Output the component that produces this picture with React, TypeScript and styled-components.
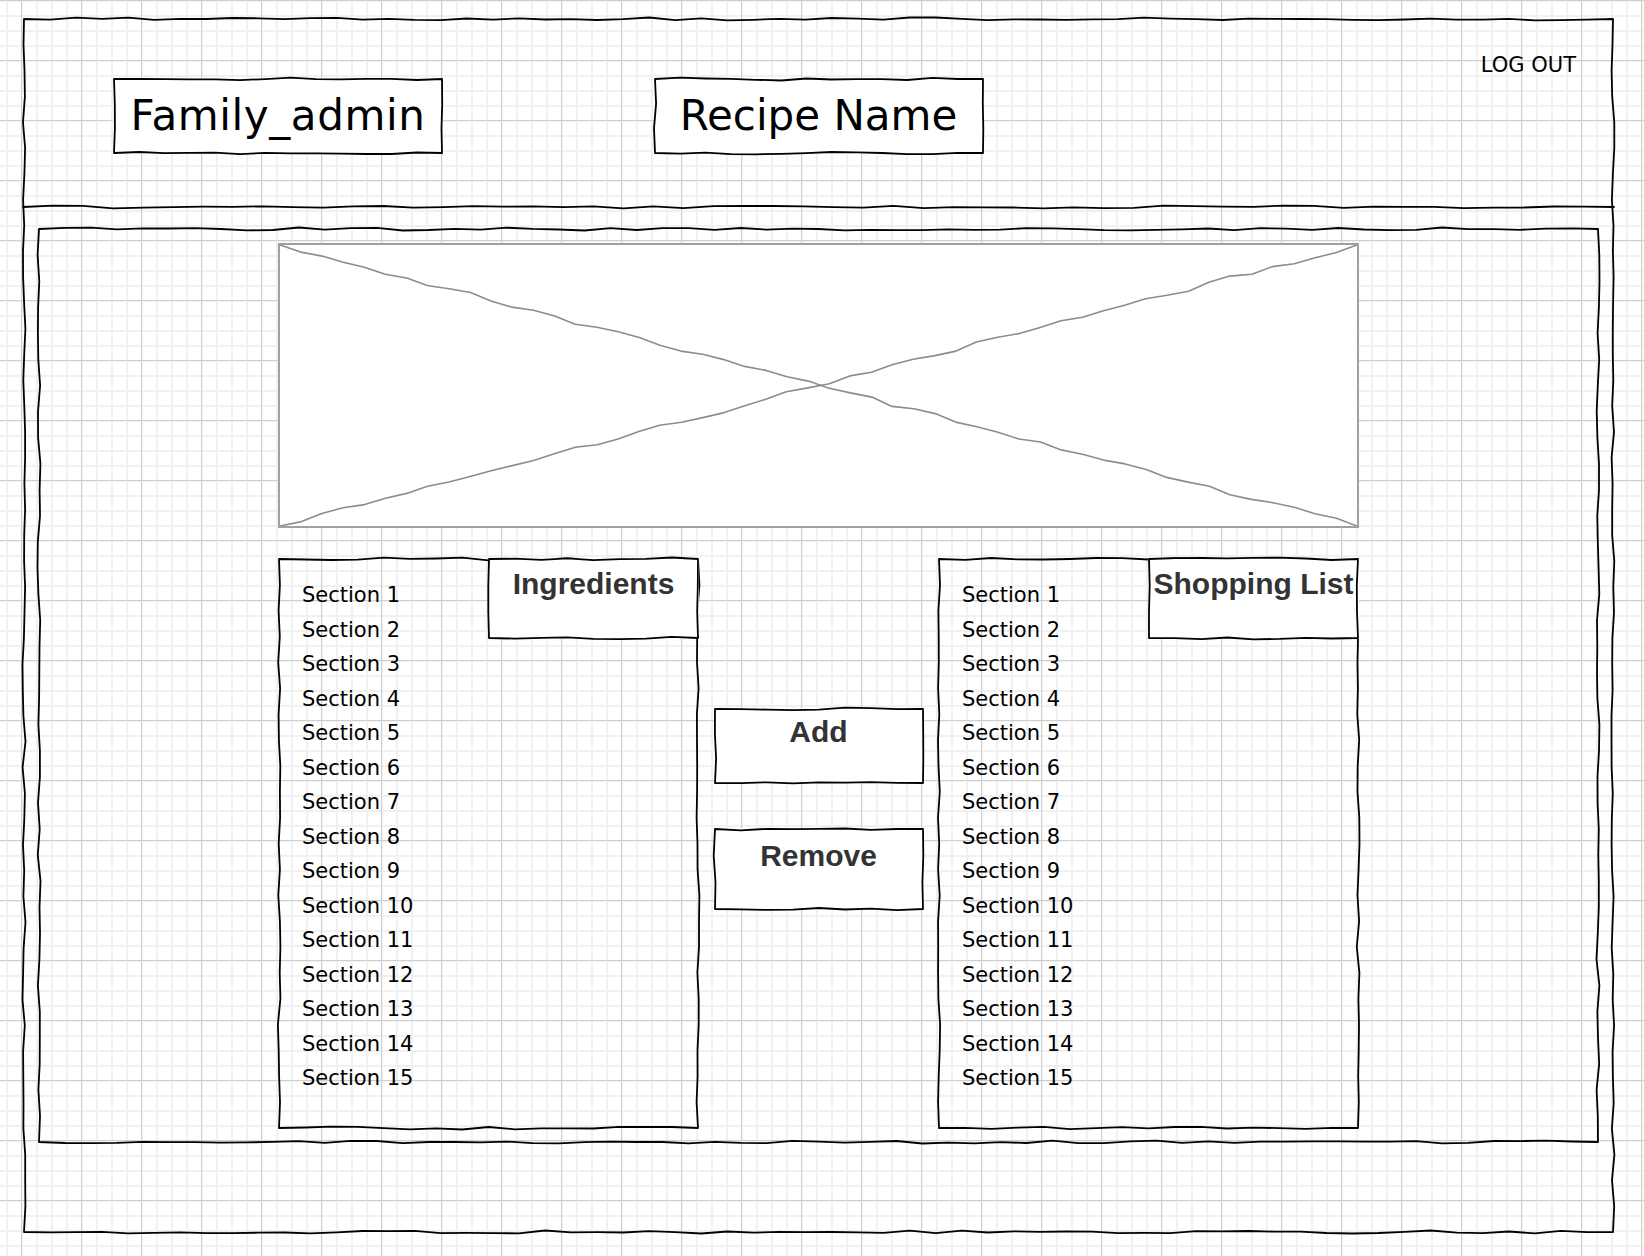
import React from 'react'
import styled, { createGlobalStyle } from 'styled-components'

type Pt = [number, number]

// seeded random so the sketchy lines look the same every render
const makeRand = (seed: number) => () => {
    seed = (seed + 0x6d2b79f5) | 0
    let t = Math.imul(seed ^ (seed >>> 15), 1 | seed)
    t = (t + Math.imul(t ^ (t >>> 7), 61 | t)) ^ t
    return ((t ^ (t >>> 14)) >>> 0) / 4294967296
}

const wobble = (pts: Pt[], rand: () => number, a: Pt, b: Pt, amp: number, step: number) => {
    const len = Math.hypot(b[0] - a[0], b[1] - a[1])
    const n = Math.max(2, Math.round(len / step))
    const nx = -(b[1] - a[1]) / len
    const ny = (b[0] - a[0]) / len
    for (let i = 1; i <= n; i++) {
        const t = i / n
        const j = i === n ? 0 : (rand() - 0.5) * 2 * amp
        pts.push([a[0] + (b[0] - a[0]) * t + nx * j, a[1] + (b[1] - a[1]) * t + ny * j])
    }
}

const toPath = (pts: Pt[]) =>
    pts.map((p, i) => `${i ? 'L' : 'M'}${p[0].toFixed(1)} ${p[1].toFixed(1)}`).join(' ')

const rectPath = (w: number, h: number, seed: number) => {
    const rand = makeRand(seed)
    const c: Pt[] = [[1, 1], [w - 1, 1], [w - 1, h - 1], [1, h - 1]]
    const pts: Pt[] = [c[0]]
    for (let i = 0; i < 4; i++) wobble(pts, rand, c[i], c[(i + 1) % 4], 1.5, 26)
    return toPath(pts) + ' Z'
}

const linePath = (a: Pt, b: Pt, seed: number, amp = 1.5, step = 26) => {
    const pts: Pt[] = [a]
    wobble(pts, makeRand(seed), a, b, amp, step)
    return toPath(pts)
}

const GlobalStyle = createGlobalStyle`
    html, body {
        margin: 0;
        padding: 0;
    }
    body {
        min-height: 1256px;
        font-family: "DejaVu Sans", Verdana, sans-serif;
        color: #000;
        background-color: #fff;
        background-image:
            linear-gradient(to right, #d0d0d0 1px, transparent 1px),
            linear-gradient(to bottom, #d0d0d0 1px, transparent 1px),
            linear-gradient(to right, #f1f1f1 2px, transparent 2px),
            linear-gradient(to bottom, #f1f1f1 2px, transparent 2px);
        background-size: 60px 60px, 60px 60px, 15px 15px, 15px 15px;
        background-position: 21px 0, 21px 0, 6px 0, 6px 0;
    }
`

const Outline = styled.svg`
    position: absolute;
    left: 0;
    top: 0;
    overflow: visible;
    pointer-events: none;
    fill: none;
    stroke: #000;
    stroke-width: 1.8;
    stroke-linejoin: round;
    stroke-linecap: round;
`

const Sketch = ({ w, h, seed }: { w: number; h: number; seed: number }) => {
    const d = React.useMemo(() => rectPath(w, h, seed), [w, h, seed])
    return (
        <Outline width={w} height={h}>
            <path d={d} />
        </Outline>
    )
}

const Frame = styled.div`
    position: relative;
    width: 1591px;
    height: 1215px;
    margin: 18px 0 0 23px;
    display: flex;
    flex-direction: column;
`

const Header = styled.header`
    position: relative;
    height: 189px;
    display: grid;
    grid-template-columns: 1fr 330px 1fr;
    align-items: start;
`

const Divider = styled(Outline)`
    top: auto;
    bottom: -1px;
`

const TitleBox = styled.div<{ $left?: number; $track?: number }>`
    position: relative;
    width: 330px;
    height: 76px;
    margin: 60px 0 0 ${p => p.$left ?? 0}px;
    background: #fff;
    display: flex;
    align-items: center;
    justify-content: center;
    font-size: 42px;
    letter-spacing: ${p => p.$track ?? 0}px;
    line-height: 1;
`

const LogOut = styled.a`
    justify-self: end;
    margin: 35px 38px 0 0;
    font-size: 21px;
    line-height: 24px;
    color: #000;
    cursor: pointer;
`

const Main = styled.main`
    position: relative;
    width: 1561px;
    height: 915px;
    margin: 21px 15px 0;
    padding-top: 15px;
    box-sizing: border-box;
    display: flex;
    flex-direction: column;
    align-items: center;
`

const ImageHolder = styled.div`
    width: 1081px;
    height: 285px;
    box-sizing: border-box;
    border: 2px solid #a0a0a0;
    background: #fff;

    svg {
        display: block;
        fill: none;
        stroke: #8c8c8c;
        stroke-width: 1.6;
        stroke-linejoin: round;
    }
`

const Columns = styled.div`
    margin-top: 30px;
    display: grid;
    grid-template-columns: 421px 239px 421px;
`

const ListBox = styled.section`
    position: relative;
    height: 571px;
    display: flex;
    justify-content: space-between;
    align-items: flex-start;
`

const Items = styled.ul`
    list-style: none;
    margin: 0;
    padding: 20px 0 0 24px;
    font-size: 21px;
    line-height: 34.5px;
`

const Label = styled.div<{ $w: number; $h: number; $pad: number }>`
    position: relative;
    width: ${p => p.$w}px;
    height: ${p => p.$h}px;
    box-sizing: border-box;
    padding-top: ${p => p.$pad}px;
    background: #fff;
    text-align: center;
    font-family: "Liberation Sans", Arial, sans-serif;
    font-weight: bold;
    font-size: 30px;
    line-height: 36px;
    color: #333;
    white-space: nowrap;
`

const Actions = styled.div`
    display: flex;
    flex-direction: column;
    align-items: center;
    gap: 44px;
    padding-top: 150px;
`

const sections = Array.from({ length: 15 }, (_, i) => `Section ${i + 1}`)

const List = ({ title, seed }: { title: string; seed: number }) => (
    <ListBox>
        <Sketch w={421} h={571} seed={seed} />
        <Items>
            {sections.map(s => (
                <li key={s}>{s}</li>
            ))}
        </Items>
        <Label $w={211} $h={81} $pad={8}>
            <Sketch w={211} h={81} seed={seed + 1} />
            {title}
        </Label>
    </ListBox>
)

const Placeholder = () => {
    const a = React.useMemo(() => linePath([0, 0], [1077, 281], 41, 2.4, 22), [])
    const b = React.useMemo(() => linePath([0, 281], [1077, 0], 57, 2.4, 22), [])
    return (
        <ImageHolder>
            <svg width={1077} height={281}>
                <path d={a} />
                <path d={b} />
            </svg>
        </ImageHolder>
    )
}

export default function App() {
    const divider = React.useMemo(() => linePath([0, 1], [1591, 1], 7, 1.4, 30), [])
    return (
        <>
            <GlobalStyle />
            <Frame>
                <Sketch w={1591} h={1215} seed={3} />
                <Header>
                    <TitleBox $left={90} $track={0.6}>
                        <Sketch w={330} h={76} seed={11} />
                        Family_admin
                    </TitleBox>
                    <TitleBox>
                        <Sketch w={330} h={76} seed={19} />
                        Recipe Name
                    </TitleBox>
                    <LogOut>LOG OUT</LogOut>
                    <Divider width={1591} height={2}>
                        <path d={divider} />
                    </Divider>
                </Header>
                <Main>
                    <Sketch w={1561} h={915} seed={23} />
                    <Placeholder />
                    <Columns>
                        <List title="Ingredients" seed={31} />
                        <Actions>
                            <Label $w={210} $h={76} $pad={6}>
                                <Sketch w={210} h={76} seed={61} />
                                Add
                            </Label>
                            <Label $w={210} $h={82} $pad={10}>
                                <Sketch w={210} h={82} seed={67} />
                                Remove
                            </Label>
                        </Actions>
                        <List title="Shopping List" seed={71} />
                    </Columns>
                </Main>
            </Frame>
        </>
    )
}
